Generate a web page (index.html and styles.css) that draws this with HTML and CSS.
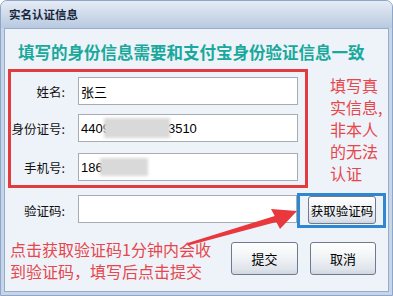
FILE: index.html
```html
<!DOCTYPE html>
<html lang="zh-CN">
<head>
<meta charset="utf-8">
<title>实名认证信息</title>
<link rel="stylesheet" href="styles.css">
</head>
<body>
<div class="window">
  <div class="titlebar"><span class="title">实名认证信息</span></div>
  <div class="client">
    <div class="headline">填写的身份信息需要和支付宝身份验证信息一致</div>
    <div class="main">
      <div class="redbox">
        <div class="row row1"><span class="label">姓名:</span><div class="input">张三</div></div>
        <div class="row row2"><span class="label">身份证号:</span><div class="input">4409<span class="blur blur-id"></span>3510</div></div>
        <div class="row row3"><span class="label">手机号:</span><div class="input">186<span class="blur blur-phone"></span></div></div>
      </div>
      <div class="note">填写真<br>实信息,<br>非本人<br>的无法<br>认证</div>
    </div>
    <div class="verify">
      <span class="label vlabel">验证码:</span>
      <div class="input vinput"></div>
      <div class="bluebox"><button class="btn getcode">获取验证码</button></div>
    </div>
    <div class="bottom">
      <div class="tip">点击获取验证码1分钟内会收<br>到验证码，填写后点击提交</div>
      <button class="btn submit">提交</button>
      <button class="btn cancel">取消</button>
    </div>
  </div>
  <svg class="arrow" width="393" height="296" viewBox="0 0 393 296">
    <polygon points="187.7,243 274.7,216.1 271,209 297,211 280,229 276.3,221.9 188.3,245.5" fill="#e8383d"/>
  </svg>
</div>
</body>
</html>
```

FILE: styles.css
```css
html, body {
  margin: 0;
  padding: 0;
  background: #ffffff;
}

body {
  font-family: "Noto Sans CJK SC", "Liberation Sans", sans-serif;
}

.window {
  position: relative;
  width: 393px;
  height: 296px;
  box-sizing: border-box;
  background: #c6d5ea;
  border: 1px solid #8ea6c8;
  border-radius: 7px 7px 0 0;
  display: flex;
  flex-direction: column;
  overflow: hidden;
}

.titlebar {
  height: 27px;
  flex: none;
  background: linear-gradient(#e6ecf5 0%, #d3deec 40%, #b8c9e0 100%);
  display: flex;
  align-items: center;
  padding-left: 8px;
}

.title {
  font-size: 11.5px;
  font-weight: bold;
  color: #17263c;
  line-height: 14px;
  margin-top: -1px;
}

.client {
  flex: 1;
  margin: 0 3px 3px 3px;
  border: 1px solid #98abc7;
  background: #eef2f9;
  display: flex;
  flex-direction: column;
}

.headline {
  margin-top: 11px;
  padding-left: 13px;
  height: 24px;
  line-height: 24px;
  font-size: 16.5px;
  font-weight: bold;
  color: #18a99c;
  white-space: nowrap;
}

.main {
  margin-top: 5px;
  margin-left: 3px;
  display: flex;
  align-items: flex-start;
}

.redbox {
  width: 300px;
  height: 119px;
  box-sizing: border-box;
  border: 3px solid #e23b40;
  padding: 5px 7px 4px 0;
  display: flex;
  flex-direction: column;
}

.row {
  display: flex;
  align-items: center;
}

.row2 { margin-top: 9px; }
.row3 { margin-top: 11px; }

.label {
  width: 54px;
  margin-right: 13px;
  text-align: right;
  font-size: 12.5px;
  color: #111;
  white-space: nowrap;
  flex: none;
}

.input {
  width: 220px;
  height: 28px;
  box-sizing: border-box;
  border: 1px solid #a7acb3;
  background: #ffffff;
  display: flex;
  align-items: center;
  padding-left: 2px;
  font-family: "Liberation Sans", "Noto Sans CJK SC", sans-serif;
  font-size: 13px;
  color: #000;
  white-space: nowrap;
  flex: none;
}

.blur {
  display: inline-block;
  background: #d9d9d9;
  filter: blur(1.5px);
  position: relative;
}

.blur-id {
  width: 66px;
  height: 20px;
  margin: 0 -2px 0 -6px;
}

.blur-phone {
  width: 48px;
  height: 18px;
  margin-left: -3px;
}

.note {
  margin-left: 22px;
  padding-top: 5px;
  font-size: 16px;
  line-height: 22px;
  color: #e6474c;
  white-space: nowrap;
}

.verify {
  margin-top: 5px;
  display: flex;
  align-items: flex-start;
}

.vlabel {
  margin-left: 6px;
  margin-top: 8px;
}

.vinput {
  width: 219px;
  height: 28px;
  margin-top: 2px;
}

.bluebox {
  width: 89px;
  height: 35px;
  box-sizing: border-box;
  border: 3px solid #2f86d1;
  padding-left: 8px;
  display: flex;
  align-items: flex-start;
}

.btn {
  box-sizing: border-box;
  border: 1px solid #6f7b8c;
  border-radius: 3px;
  background: linear-gradient(#ffffff 0%, #f1f3f6 45%, #dfe4eb 85%, #cfd6e0 100%);
  font-family: "Noto Sans CJK SC", "Liberation Sans", sans-serif;
  font-size: 12.5px;
  color: #000;
  padding: 0;
  margin: 0;
}

.getcode {
  width: 68px;
  height: 28px;
}

.bottom {
  margin-top: 12px;
  display: flex;
  align-items: flex-start;
}

.tip {
  margin-left: 5px;
  margin-top: -2px;
  width: 221px;
  font-size: 16px;
  line-height: 22px;
  color: #e6474c;
  white-space: nowrap;
}

.submit {
  width: 67px;
  height: 33px;
  margin-top: 2px;
  font-size: 13px;
}

.cancel {
  width: 66px;
  height: 33px;
  margin-top: 2px;
  margin-left: 12px;
  font-size: 13px;
}

.arrow {
  position: absolute;
  left: -1px;
  top: -1px;
  pointer-events: none;
}
```
